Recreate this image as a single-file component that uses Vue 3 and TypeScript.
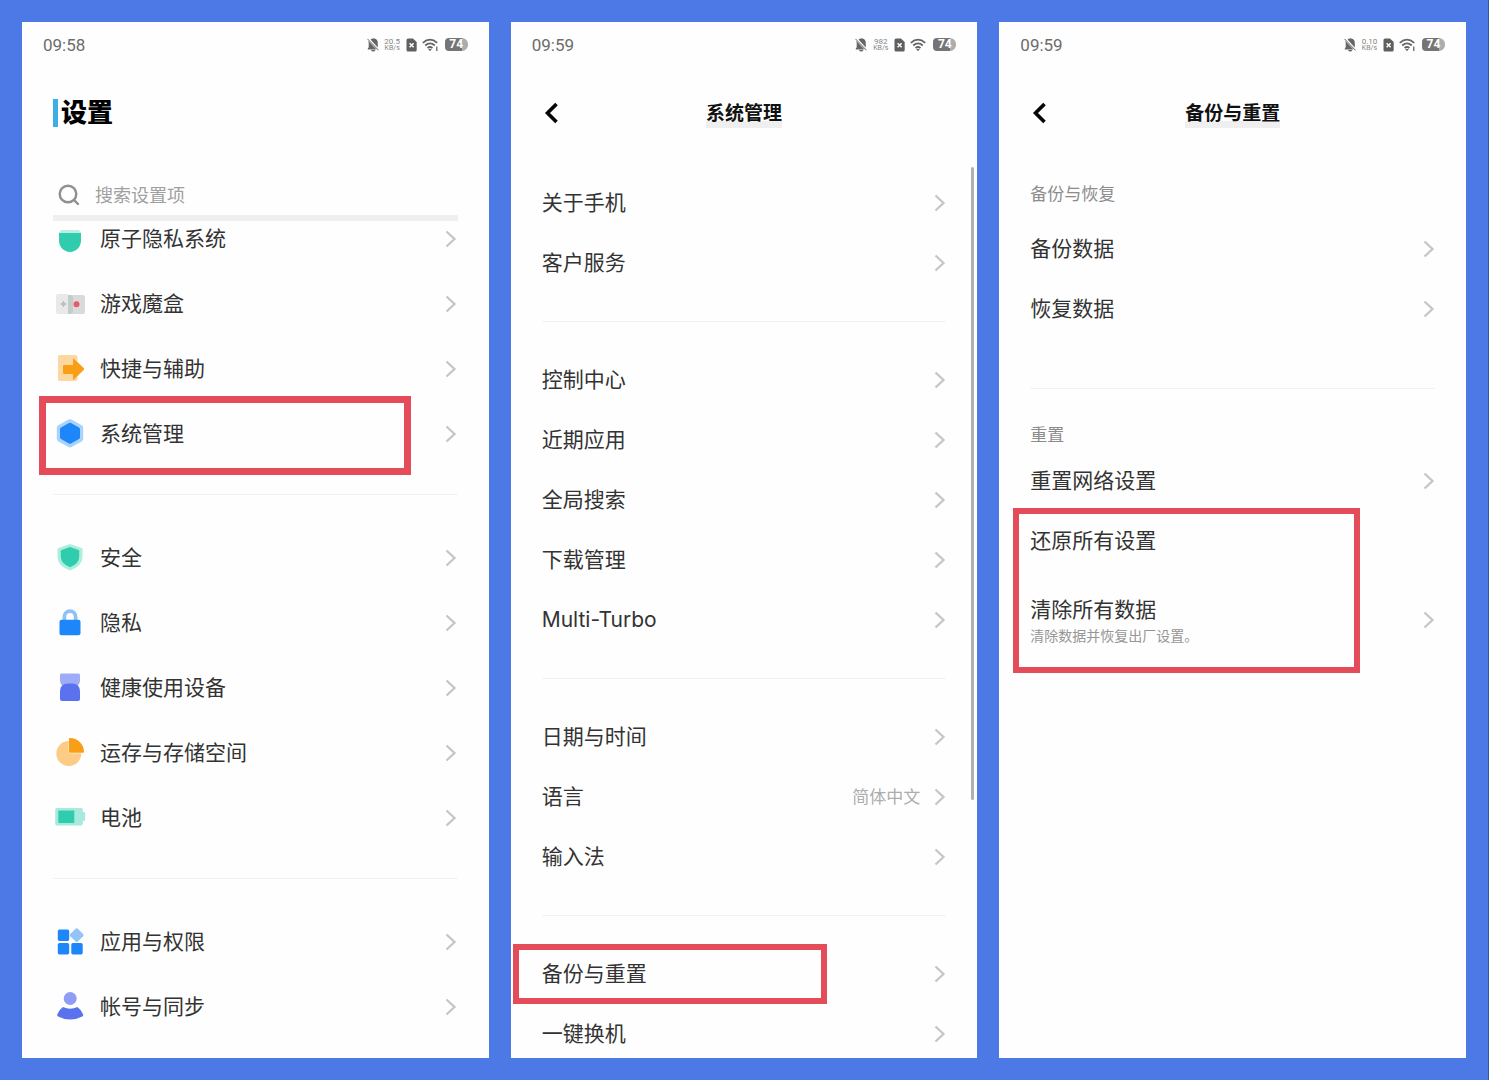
<script setup lang="ts">
interface Shape {
  d: string
  fill: string
}
interface Row {
  text: string
  icon?: string
  value?: string
  note?: string
  plain?: boolean
}
interface Cluster {
  highlight?: string
  rows: Row[]
}
interface Group {
  label?: string
  clusters: Cluster[]
}
interface Screen {
  id: string
  time: string
  speed: string
  title: string
  groups: Group[]
}

const icons: Record<string, Shape[]> = {
  atom: [
    { fill: '#b9efe3', d: 'M7 7h18l2 3H5z' },
    { fill: '#2fcdae', d: 'M5 10h22v7.500C27 24 22 29 16 29S5 24 5 17.500z' },
  ],
  game: [
    { fill: '#e9e9e9', d: 'M4 6h10v20H4q-2 0-2-2V8q0-2 2-2z' },
    { fill: '#dadada', d: 'M14 7h15q2 0 2 2v15q0 2-2 2H14z' },
    { fill: '#c6cccb', d: 'M14 7h2q3 0 3 3v13q0 3-3 3h-2z' },
    { fill: '#bdbdbd', d: 'M9.500 12.500l1.200 2.300 2.300 1.200-2.300 1.200-1.200 2.300-1.200-2.300L6 16l2.300-1.200z' },
    { fill: '#e9596c', d: 'M22.500 13.300a3 3 0 1 1 0 6 3 3 0 0 1 0-6z' },
  ],
  assist: [
    { fill: '#fcd7a0', d: 'M6 2h15q2.500 0 2.500 2.500v21q0 2.500-2.500 2.500H6q-2 0-2-2V4q0-2 2-2z' },
    { fill: '#f99f17', d: 'M10 12h9V6.500q0-1.500 1.200-.6l9.500 9.200q1 1 0 2l-9.500 9.200q-1.200.9-1.200-.6V21h-9q-1 0-1-1v-7q0-1 1-1z' },
  ],
  system: [
    { fill: '#a9d3fb', d: 'M14.500 1.600q1.500-.8 3 0l10.200 5.600q1.500.9 1.500 2.600v11q0 1.700-1.500 2.600l-10.200 5.600q-1.500.8-3 0L4.300 23.400q-1.500-.9-1.500-2.600v-11q0-1.700 1.500-2.600z' },
    { fill: '#1d86f8', d: 'M15 5q1-.6 2 0l8 4.500q1 .6 1 1.700v8q0 1.100-1 1.700l-8 4.500q-1 .6-2 0l-8-4.500q-1-.6-1-1.700v-8q0-1.100 1-1.700z' },
  ],
  shield: [
    { fill: '#aeeedd', d: 'M16 2l11.500 4q1 .4 1 1.500V15q0 9-12.500 13.500Q3.500 24 3.500 15V7.500q0-1.100 1-1.500z' },
    { fill: '#2fcdae', d: 'M16 5l8.500 3q.7.300.7 1.200V15q0 6.500-9.200 10.300Q6.800 21.500 6.800 15V9.200q0-.9.700-1.200z' },
  ],
  lock: [
    { fill: '#8ec1f8', d: 'M8.500 13.500V10a7.500 7.800 0 0 1 15 0v3.500h-3.700V10a3.800 4 0 0 0-7.600 0v3.500z' },
    { fill: '#1d86f8', d: 'M7.500 12.800h17q2 0 2 2v11.500q0 2-2 2h-17q-2 0-2-2V14.800q0-2 2-2z' },
  ],
  health: [
    { fill: '#9fabf7', d: 'M7.500 1.500h17q1.500 0 1.500 1.500v6q0 3-3 5H9q-3-2-3-5V3q0-1.500 1.500-1.500z' },
    { fill: '#5a72ee', d: 'M14 11.500h4q8 0 8 8V27q0 2-2 2H8q-2 0-2-2v-7.500q0-8 8-8z' },
  ],
  storage: [
    { fill: '#fccc87', d: 'M14.700 4v12.300H27.300A12.500 12.500 0 1 1 14.700 4z' },
    { fill: '#f99f17', d: 'M15 2q0-1 1-.900A14 14 0 0 1 30 14.800q0 1-1 1H15z' },
  ],
  battery: [
    { fill: '#a8eadc', d: 'M3 6h24q1.800 0 1.800 1.800V10h1q1.400 0 1.400 1.400v6.200q0 1.400-1.400 1.400h-1v2.700q0 1.800-1.800 1.800H3q-1.800 0-1.800-1.800V7.800Q1.200 6 3 6z' },
    { fill: '#2fcdae', d: 'M5.300 8.500h15v12.500h-15q-1 0-1-1V9.500q0-1 1-1z' },
  ],
  apps: [
    { fill: '#1d86f8', d: 'M5.500 3.500h8q1.700 0 1.700 1.700v8q0 1.700-1.700 1.700h-8q-1.700 0-1.700-1.700v-8q0-1.700 1.700-1.700z' },
    { fill: '#1d86f8', d: 'M5.500 17h8q1.700 0 1.700 1.700v8q0 1.700-1.700 1.700h-8q-1.700 0-1.700-1.700v-8q0-1.700 1.700-1.700z' },
    { fill: '#1d86f8', d: 'M19 17h8q1.700 0 1.700 1.700v8q0 1.700-1.700 1.700h-8q-1.700 0-1.700-1.700v-8q0-1.700 1.700-1.700z' },
    { fill: '#93c3f8', d: 'M21.600 2.800q1.100-1 2.200 0l5.300 5.300q1 1.100 0 2.200l-5.300 5.300q-1.100 1-2.200 0l-5.300-5.300q-1-1.100 0-2.200z' },
  ],
  account: [
    { fill: '#8f9df3', d: 'M16.200 1a6.500 6.500 0 1 1 0 13 6.500 6.500 0 0 1 0-13z' },
    { fill: '#5a72ee', d: 'M9 16q7.200 3.500 14.400 0 4.300 3 5.800 7.500.3 1.200-1 2-5.300 3-12 3t-12-3q-1.300-.8-1-2Q4.700 19 9 16z' },
  ],
}

const screens: Screen[] = [
  {
    id: 'home',
    time: '09:58',
    speed: '20.5',
    title: '设置',
    groups: [
      {
        clusters: [
          {
            rows: [
              { text: '原子隐私系统', icon: 'atom' },
              { text: '游戏魔盒', icon: 'game' },
              { text: '快捷与辅助', icon: 'assist' },
            ],
          },
          { highlight: 'mark-system', rows: [{ text: '系统管理', icon: 'system' }] },
        ],
      },
      {
        clusters: [
          {
            rows: [
              { text: '安全', icon: 'shield' },
              { text: '隐私', icon: 'lock' },
              { text: '健康使用设备', icon: 'health' },
              { text: '运存与存储空间', icon: 'storage' },
              { text: '电池', icon: 'battery' },
            ],
          },
        ],
      },
      {
        clusters: [
          {
            rows: [
              { text: '应用与权限', icon: 'apps' },
              { text: '帐号与同步', icon: 'account' },
            ],
          },
        ],
      },
    ],
  },
  {
    id: 'system',
    time: '09:59',
    speed: '982',
    title: '系统管理',
    groups: [
      { clusters: [{ rows: [{ text: '关于手机' }, { text: '客户服务' }] }] },
      {
        clusters: [
          {
            rows: [
              { text: '控制中心' },
              { text: '近期应用' },
              { text: '全局搜索' },
              { text: '下载管理' },
              { text: 'Multi-Turbo' },
            ],
          },
        ],
      },
      {
        clusters: [
          { rows: [{ text: '日期与时间' }, { text: '语言', value: '简体中文' }, { text: '输入法' }] },
        ],
      },
      {
        clusters: [
          { highlight: 'mark-backup', rows: [{ text: '备份与重置' }] },
          { rows: [{ text: '一键换机' }] },
        ],
      },
    ],
  },
  {
    id: 'backup',
    time: '09:59',
    speed: '0.10',
    title: '备份与重置',
    groups: [
      { label: '备份与恢复', clusters: [{ rows: [{ text: '备份数据' }, { text: '恢复数据' }] }] },
      {
        label: '重置',
        clusters: [
          { rows: [{ text: '重置网络设置' }] },
          {
            highlight: 'mark-reset',
            rows: [
              { text: '还原所有设置', plain: true },
              { text: '清除所有数据', note: '清除数据并恢复出厂设置。' },
            ],
          },
        ],
      },
    ],
  },
]
</script>

<template>
  <main class="stage">
    <section v-for="screen in screens" :key="screen.id" class="phone" :class="screen.id">
      <div class="status">
        <span class="time">{{ screen.time }}</span>
        <svg viewBox="0 0 12 14" width="12" height="14" fill="#666">
          <path d="M3.500 1.600Q4.800.7 6 .6q.700-.8 1.400 0Q10.800 1.400 10.800 5v4.600zM1.200 2.800l8.300 8.600H.8v-.9l.9-1.200V5zM4 12h4.400q-.6 1.600-2.200 1.600T4 12z" />
          <path d="M.5.900l11 11.400" fill="none" stroke="#666" stroke-width="1" />
        </svg>
        <span class="speed"><span>{{ screen.speed }}</span><span>KB/s</span></span>
        <svg viewBox="0 0 11 14" width="11" height="14">
          <path d="M2 .5h5L10.700 4v8q0 1.500-1.500 1.500H2Q.5 13.500.5 12V2Q.5.5 2 .5z" fill="#606060" />
          <path d="M3.600 5.200l4 4M7.600 5.200l-4 4" stroke="#fff" stroke-width="1.400" />
        </svg>
        <svg viewBox="0 0 17 14" width="17" height="14" fill="none" stroke="#666" stroke-width="1.800">
          <path d="M.8 4.800q7.200-6.400 14.400 0M3.200 7.500q4.800-4.200 9.600 0M5.500 10q2.500-2 5 0" />
          <path d="M6.200 11h3.600L8 13.200z" fill="#666" stroke="none" />
          <path v-if="screen.id !== 'system'" d="M14.800 8.500v4.500" stroke-width="1.300" />
        </svg>
        <span class="charge">74</span>
      </div>

      <template v-if="screen.id === 'home'">
        <header class="home-head"><h1>{{ screen.title }}</h1></header>
        <label class="search">
          <svg viewBox="0 0 22 22" width="22" height="22" fill="none" stroke="#8f8f8f" stroke-width="2.400">
            <circle cx="10" cy="10" r="8.300" />
            <path d="M16 16l4 4" stroke-linecap="round" />
          </svg>
          <input type="search" placeholder="搜索设置项" aria-label="搜索设置项" />
        </label>
      </template>
      <header v-else class="nav">
        <button type="button" class="back" aria-label="返回">
          <svg viewBox="0 0 20 24" width="20" height="24" fill="none" stroke="#050505" stroke-width="3.600">
            <path d="M14.500 3L5.500 12l9 9" />
          </svg>
        </button>
        <h1>{{ screen.title }}</h1>
      </header>

      <div class="list">
        <div v-for="(group, g) in screen.groups" :key="g" class="group">
          <h2 v-if="group.label">{{ group.label }}</h2>
          <div v-for="(cluster, c) in group.clusters" :key="c" class="cluster">
            <a v-for="row in cluster.rows" :key="row.text" href="#" class="row" :class="{ tall: row.note }">
              <svg v-if="row.icon" class="icon" viewBox="0 0 32 32" width="32" height="32">
                <path v-for="(shape, s) in icons[row.icon]" :key="s" :d="shape.d" :fill="shape.fill" />
              </svg>
              <span class="text">
                <span class="name">{{ row.text }}</span>
                <span v-if="row.note" class="note">{{ row.note }}</span>
              </span>
              <span v-if="row.value" class="value">{{ row.value }}</span>
              <svg v-if="!row.plain" class="chevron" viewBox="0 0 12 20" width="12" height="20" fill="none" stroke="#c6c6c6" stroke-width="2.300">
                <path d="M1.500 2.500L9.500 10l-8 7.500" />
              </svg>
            </a>
            <span v-if="cluster.highlight" class="mark" :class="cluster.highlight"></span>
          </div>
        </div>
        <span v-if="screen.id === 'system'" class="scrollbar"></span>
      </div>
    </section>
  </main>
</template>

<style>
body {
  margin: 0;
}
</style>

<style scoped>
* {
  box-sizing: border-box;
}
.stage {
  display: grid;
  grid-template-columns: repeat(3, minmax(0, 1fr));
  gap: 22px;
  height: 100vh;
  padding: 22px;
  border-right: 1px solid #3155ad;
  background: #4c79e6;
  color: #333;
  font-family: Roboto, "Noto Sans CJK SC", sans-serif;
}
.phone {
  display: flex;
  flex-direction: column;
  min-height: 0;
  overflow: hidden;
  background: #fefefe;
}
.status {
  display: flex;
  flex: none;
  align-items: center;
  gap: 5px;
  height: 45px;
  padding: 0 21px;
}
.time {
  margin-right: auto;
  color: #6c6c6c;
  font-size: 17px;
}
.speed {
  display: flex;
  flex-direction: column;
  width: 17px;
  color: #858585;
  font-size: 8px;
  line-height: 7px;
  text-align: center;
}
.speed span + span {
  font-size: 7px;
}
.charge {
  width: 23px;
  height: 13px;
  margin-left: 1px;
  border-radius: 4px 6px 6px 4px;
  background: linear-gradient(90deg, #757575 74%, #adadad 74%);
  color: #fff;
  font-size: 12px;
  font-weight: 700;
  line-height: 13px;
  text-align: center;
}
h1,
h2 {
  margin: 0;
}
.home-head {
  display: flex;
  flex: none;
  align-items: center;
  height: 92px;
  padding: 0 31px;
}
.home-head h1 {
  padding-left: 3px;
  border-left: 5px solid #3eaee8;
  color: #000;
  font-size: 26px;
  font-weight: 900;
  line-height: 28px;
}
.search {
  display: flex;
  flex: none;
  align-items: center;
  gap: 15px;
  height: 46px;
  margin: 16px 31px 0;
  padding-left: 5px;
  border-bottom: 6px solid #efefef;
}
.search input {
  flex: 1;
  min-width: 0;
  padding: 0;
  border: 0;
  outline: 0;
  background: none;
  color: #333;
  font: inherit;
  font-size: 18px;
}
.search input::placeholder {
  color: #a0a0a0;
}
.nav {
  display: grid;
  flex: none;
  grid-template-columns: 1fr auto 1fr;
  align-items: center;
  height: 92px;
  padding: 0 31px;
}
.nav h1 {
  padding-top: 2px;
  background: linear-gradient(#efefef, #efefef) bottom / 100% 7px no-repeat;
  color: #111;
  font-size: 19px;
  font-weight: 700;
  line-height: 28px;
}
.back {
  justify-self: start;
  width: 20px;
  height: 24px;
  padding: 0;
  border: 0;
  background: none;
}
.back svg,
.icon,
.chevron {
  display: block;
  flex: none;
}
.list {
  position: relative;
  flex: 1;
  padding: 0 31px;
}
.home .list {
  margin-top: -15px;
}
.system .list {
  padding-top: 14px;
}
.backup .list {
  padding-top: 19px;
}
.group + .group {
  margin-top: 28px;
  padding-top: 28px;
  border-top: 1px solid #f2f2f2;
}
.home .group + .group {
  padding-top: 30px;
}
.backup .group + .group {
  margin-top: 49px;
  padding-top: 30px;
}
h2 {
  color: #8c8c8c;
  font-size: 17px;
  font-weight: 400;
  line-height: 32px;
}
.backup .group:first-child h2 {
  padding-bottom: 9px;
}
.cluster {
  position: relative;
}
.row {
  display: flex;
  align-items: center;
  height: 60px;
  color: inherit;
  text-decoration: none;
}
.home .row {
  height: 65px;
  padding: 0 1px;
}
.row.tall {
  height: 98px;
}
.icon {
  margin-right: 14px;
}
.text {
  display: flex;
  flex: 1;
  flex-direction: column;
}
.name {
  font-family: Inter, "Noto Sans CJK SC", sans-serif;
  font-size: 21px;
  line-height: 28px;
}
.note {
  color: #969696;
  font-size: 14px;
  line-height: 24px;
}
.tall .text {
  padding-top: 4px;
}
.value {
  margin-right: 14px;
  color: #adadad;
  font-size: 17px;
  line-height: 20px;
}
.mark {
  position: absolute;
  border: 6px solid #e54c5a;
  pointer-events: none;
}
.mark-system {
  inset: -5px 47px -9px -14px;
  border-width: 7px;
}
.mark-backup {
  inset: 0 119px 0 -29px;
}
.mark-reset {
  inset: -3px 75px -4px -17px;
}
.scrollbar {
  position: absolute;
  top: 8px;
  right: 3px;
  width: 3px;
  height: 633px;
  border-radius: 2px;
  background: #b0b0b0;
}
</style>
